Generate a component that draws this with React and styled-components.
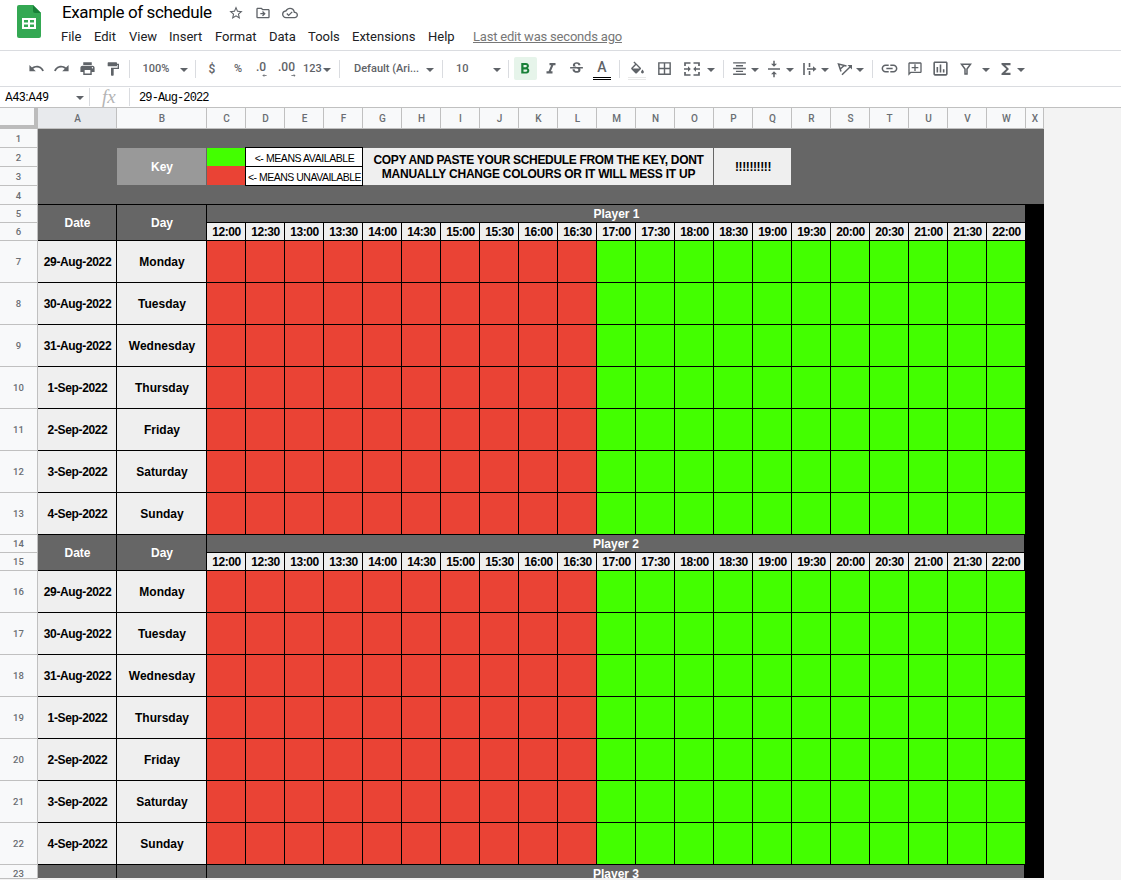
import { Fragment } from "react";
import styled, { createGlobalStyle } from "styled-components";
import {
  MdStarBorder,
  MdOutlineDriveFileMove,
  MdOutlineCloudDone,
  MdUndo,
  MdRedo,
  MdPrint,
  MdFormatPaint,
  MdFormatBold,
  MdFormatItalic,
  MdStrikethroughS,
  MdBorderAll,
  MdFormatAlignCenter,
  MdVerticalAlignCenter,
  MdLink,
  MdOutlineAddComment,
  MdOutlineInsertChart,
  MdFunctions,
} from "react-icons/md";

const GlobalStyle = createGlobalStyle`
  * {
    box-sizing: border-box;
  }
  body {
    margin: 0;
    overflow: hidden;
    background: #ffffff;
    font-family: Roboto, "Liberation Sans", sans-serif;
  }
`;

const Page = styled.div`
  display: flex;
  flex-direction: column;
  width: 1121px;
  height: 880px;
  overflow: hidden;
`;

//title and menus

const Header = styled.header`
  display: flex;
  height: 51px;
  padding-left: 17px;
  border-bottom: 1px solid #dadce0;
`;

const Logo = styled.svg`
  width: 24px;
  height: 33px;
  margin-top: 5px;
  margin-right: 20px;
`;

const HeaderCont = styled.div`
  display: flex;
  flex-direction: column;
`;

const TitleRow = styled.div`
  display: flex;
  align-items: center;
  height: 25px;
  color: #5f6368;
  svg {
    width: 16px;
    height: 16px;
    margin-right: 11px;
  }
`;

const Title = styled.h1`
  width: 167px;
  margin: 0;
  padding: 0 0 1px 1px;
  font-size: 17px;
  font-weight: 400;
  letter-spacing: -0.4px;
  white-space: nowrap;
  color: #000000;
`;

const MenuRow = styled.nav`
  display: flex;
  height: 23px;
  align-items: center;
`;

const MenuItem = styled.span`
  width: ${(props) => props.$width}px;
  font-size: 13px;
  white-space: nowrap;
  color: #202124;
`;

const LastEdit = styled.span`
  font-size: 13px;
  letter-spacing: -0.2px;
  text-decoration: underline;
  white-space: nowrap;
  color: #777777;
`;

//toolbar

const Toolbar = styled.div`
  display: flex;
  align-items: center;
  height: 36px;
  padding-left: 23px;
  border-bottom: 1px solid #dadce0;
  color: #5f6368;
`;

const Slot = styled.div`
  display: flex;
  flex: none;
  flex-direction: column;
  justify-content: center;
  align-items: ${(props) => props.$align || "center"};
  width: ${(props) => props.$width}px;
  height: 23px;
  margin-left: ${(props) => props.$left || 0}px;
  font-size: ${(props) => props.$size || 12}px;
  font-weight: 500;
  white-space: nowrap;
`;

const BoldSlot = styled(Slot)`
  border-radius: 2px;
  padding-right: 1px;
  background: #e6f4ea;
  color: #188038;
`;

const Divider = styled.div`
  flex: none;
  width: 1px;
  height: 18px;
  margin-left: ${(props) => props.$left}px;
  margin-right: ${(props) => props.$right}px;
  background: #dadce0;
`;

const Caret = styled.div`
  flex: none;
  width: 0;
  height: 0;
  margin: 2px 0 0 ${(props) => props.$left || 0}px;
  border: 4px solid transparent;
  border-top-color: #5f6368;
  border-bottom: 0;
`;

const Decimal = styled.div`
  display: flex;
  flex-direction: column;
  align-items: flex-end;
  height: 16px;
  line-height: 13px;
  svg {
    width: 7px;
    height: 5px;
    margin-right: -2px;
  }
`;

const ColorBar = styled.div`
  width: 18px;
  height: 20px;
  margin-top: 2px;
  border-bottom: 3px double ${(props) => props.$color};
  font-size: 14px;
  line-height: 15px;
  text-align: center;
`;

const Flip = styled.div`
  line-height: 0;
  transform: scaleX(-1);
`;

//formula bar

const FormulaBar = styled.div`
  display: flex;
  align-items: center;
  height: 21px;
  border-bottom: 1px solid #c0c0c0;
  color: #000000;
`;

const NameBox = styled.div`
  width: 71px;
  margin-left: 5px;
  font-size: 12px;
  letter-spacing: -0.25px;
`;

const Fx = styled.div`
  width: 27px;
  font-family: "Liberation Serif", serif;
  font-size: 19px;
  font-style: italic;
  line-height: 18px;
  color: #b4b4b4;
`;

const Formula = styled.div`
  padding-top: 2px;
  font-family: "Liberation Mono", monospace;
  font-size: 12px;
  letter-spacing: -0.87px;
`;

//sheet

const SheetArea = styled.main`
  display: flex;
  flex-direction: column;
  height: 772px;
  background: #f3f3f3;
`;

const ColumnRow = styled.div`
  display: grid;
  grid-template-columns: 38px 79px 90px repeat(21, 39px) 18px;
  width: 1044px;
  height: 21px;
`;

const Corner = styled.div`
  border-right: 4px solid #bcbcbc;
  border-bottom: 4px solid #bcbcbc;
  background: #f8f9fa;
`;

const ColumnHead = styled.div`
  display: flex;
  justify-content: center;
  align-items: center;
  padding-left: 1px;
  border-right: 1px solid #c0c0c0;
  border-bottom: 1px solid #c0c0c0;
  background: ${(props) => (props.$active ? "#e8eaed" : "#f8f9fa")};
  font-size: 10px;
  font-weight: 500;
  color: #6a6e73;
`;

const Clip = styled.div`
  display: flex;
  height: 749px;
  overflow: hidden;
`;

const rowHeights =
  "repeat(4, 19px) repeat(2, 18px) repeat(7, 42px) repeat(2, 18px) repeat(7, 42px) 18px 18px";

const RowHeads = styled.div`
  display: grid;
  flex: none;
  grid-template-rows: ${rowHeights};
  width: 38px;
`;

const RowHead = styled(ColumnHead)`
  padding-left: 0;
  font-size: 9.5px;
`;

const Grid = styled.div`
  display: grid;
  flex: none;
  grid-template-columns: 79px 90px repeat(21, 39px) 18px;
  grid-template-rows: ${rowHeights};
  width: 1006px;
  font-family: "Liberation Sans", Arial, sans-serif;
  font-size: 12px;
  font-weight: 700;
`;

const Cell = styled.div`
  display: flex;
  flex-direction: column;
  justify-content: center;
  align-items: center;
  grid-area: ${(props) => props.$area};
  padding-top: 1px;
  padding-left: 1px;
  border-right: ${(props) => (props.$edge ? 2 : 1)}px solid
    ${(props) => props.$line || "#000000"};
  border-bottom: 1px solid ${(props) => props.$line || "#000000"};
  background: ${(props) => props.$bg};
  color: ${(props) => props.$color || "#000000"};
  letter-spacing: ${(props) => props.$spacing || 0}px;
  line-height: 14px;
  text-align: center;
  white-space: nowrap;
`;

const Line = styled.span`
  letter-spacing: ${(props) => props.$spacing}px;
`;

const Backdrop = styled.div`
  grid-area: 1 / 1 / 5 / 25;
  border-bottom: 1px solid #000000;
  background: #666666;
`;

const AvailableCell = styled(Cell)`
  border-right-color: #666666;
  border-bottom-color: #ea4335;
`;

const Legend = styled(Cell)`
  margin: -1px 0 0 -1px;
  padding-top: 2px;
  border: 1px solid #000000;
  font-size: 10.5px;
  font-weight: 400;
`;

const SideBar = styled.div`
  grid-area: 5 / 24 / 25 / 25;
  background: #000000;
`;

const BottomEdge = styled.div`
  height: 2px;
  width: 38px;
  border-top: 1px solid #c0c0c0;
`;

const columns = "ABCDEFGHIJKLMNOPQRSTUVWX".split("");
const menus = [
  ["File", 33],
  ["Edit", 35],
  ["View", 40],
  ["Insert", 46],
  ["Format", 54],
  ["Data", 39],
  ["Tools", 44],
  ["Extensions", 76],
  ["Help", 45],
];
const days = [
  ["29-Aug-2022", "Monday"],
  ["30-Aug-2022", "Tuesday"],
  ["31-Aug-2022", "Wednesday"],
  ["1-Sep-2022", "Thursday"],
  ["2-Sep-2022", "Friday"],
  ["3-Sep-2022", "Saturday"],
  ["4-Sep-2022", "Sunday"],
];
const times = Array.from(
  { length: 21 },
  (_, i) => `${12 + Math.floor(i / 2)}:${i % 2 ? "30" : "00"}`
);

const GREEN = "#43ff00";
const RED = "#ea4335";
const GREY = "#666666";
const LIGHT = "#efefef";

const SheetsLogo = () => (
  <Logo viewBox="0 0 24 33">
    <path d="M2 0h14l8 8v23a2 2 0 0 1-2 2H2a2 2 0 0 1-2-2V2a2 2 0 0 1 2-2z" fill="#34a853" />
    <path d="M16 0l8 8h-6a2 2 0 0 1-2-2z" fill="#188038" />
    <path
      d="M5 13h14v11H5zM7 15v2.500h4V15zm6 0v2.500h4V15zm-6 4.500V22h4v-2.500zm6 0V22h4v-2.500z"
      fill="#ffffff"
      fillRule="evenodd"
    />
  </Logo>
);

const FillIcon = () => (
  <svg width="17" height="17" viewBox="0 -2 24 24" fill="currentColor">
    <path d="M16.560 8.940L7.620 0 6.210 1.410l2.380 2.380-5.150 5.150c-.59.59-.59 1.540 0 2.120l5.500 5.500c.29.29.68.44 1.060.44s.77-.15 1.060-.44l5.500-5.500c.59-.58.59-1.530 0-2.120zM5.210 10L10 5.210 14.790 10H5.210zM19 11.500s-2 2.170-2 3.500c0 1.100.9 2 2 2s2-.9 2-2c0-1.330-2-3.500-2-3.500z" />
  </svg>
);

const MergeIcon = () => (
  <svg width="16" height="14" viewBox="0 0 16 14" fill="none" stroke="currentColor" strokeWidth="1.7">
    <path d="M1 4V1h5.500M9.500 1H15v3M1 10v3h5.500M9.500 13H15v-3" />
    <path d="M0 7h5M16 7h-5" />
    <path d="M4 4.300L6.800 7 4 9.700zM12 4.300L9.200 7 12 9.700z" fill="currentColor" stroke="none" />
  </svg>
);

const WrapIcon = () => (
  <svg width="14" height="14" viewBox="0 0 14 14" fill="none" stroke="currentColor" strokeWidth="1.600">
    <path d="M1 1v12M6.500 1v4M6.500 9v4M4 7h8" />
    <path d="M10 4.200L13.500 7 10 9.800z" fill="currentColor" stroke="none" />
  </svg>
);

const RotateIcon = () => (
  <svg width="16" height="14" viewBox="0 0 16 14" fill="none" stroke="currentColor" strokeWidth="1.500">
    <path d="M4 9.500L1.500 2l8 2M3 7.200L7.200 3.500M5 12.800L13.500 4.500" />
    <path d="M10.500 3H15v4.500z" fill="currentColor" stroke="none" />
  </svg>
);

const FilterIcon = () => (
  <svg width="12" height="12" viewBox="0 0 12 12" fill="none" stroke="currentColor" strokeWidth="1.500">
    <path d="M1.500 1.200h9L7 6v5H5V6z" />
  </svg>
);

const ArrowIcon = ({ right }) => (
  <svg viewBox="0 0 7 5" fill="none" stroke="currentColor" strokeWidth="1.300">
    <path d={right ? "M0 2.500h6M4 .5l2 2-2 2" : "M7 2.500H1M3 .5l-2 2 2 2"} />
  </svg>
);

const PlayerHead = ({ row, name, edge }) => (
  <>
    <Cell $area={`${row} / 1 / ${row + 2} / 2`} $bg={GREY} $color="#fff">
      {row < 23 && "Date"}
    </Cell>
    <Cell $area={`${row} / 2 / ${row + 2} / 3`} $bg={GREY} $color="#fff">
      {row < 23 && "Day"}
    </Cell>
    <Cell $area={`${row} / 3 / ${row + 1} / 24`} $bg={GREY} $color="#fff" $edge={edge}>
      {name}
    </Cell>
  </>
);

const PlayerBlock = ({ row, name, edge }) => (
  <>
    <PlayerHead row={row} name={name} edge={edge} />
    {times.map((time, i) => (
      <Cell
        key={time}
        $area={`${row + 1} / ${i + 3}`}
        $bg={LIGHT}
        $spacing={-0.4}
        $edge={edge && i === 20}
      >
        {time}
      </Cell>
    ))}
    {days.map(([date, day], d) => (
      <Fragment key={date}>
        <Cell $area={`${row + 2 + d} / 1`} $bg={LIGHT} $spacing={-0.35}>
          {date}
        </Cell>
        <Cell $area={`${row + 2 + d} / 2`} $bg={LIGHT}>
          {day}
        </Cell>
        {times.map((time, i) => (
          <Cell
            key={time}
            $area={`${row + 2 + d} / ${i + 3}`}
            $bg={i < 10 ? RED : GREEN}
          />
        ))}
      </Fragment>
    ))}
  </>
);

const App = () => {
  return (
    <Page>
      <GlobalStyle />
      <Header>
        <SheetsLogo />
        <HeaderCont>
          <TitleRow>
            <Title>Example of schedule</Title>
            <MdStarBorder />
            <MdOutlineDriveFileMove />
            <MdOutlineCloudDone />
          </TitleRow>
          <MenuRow>
            {menus.map(([label, width]) => (
              <MenuItem key={label} $width={width}>
                {label}
              </MenuItem>
            ))}
            <LastEdit>Last edit was seconds ago</LastEdit>
          </MenuRow>
        </HeaderCont>
      </Header>

      <Toolbar>
        <Slot $width={26}><MdUndo size={17} /></Slot>
        <Slot $width={25}><MdRedo size={17} /></Slot>
        <Slot $width={26}><MdPrint size={17} /></Slot>
        <Slot $width={26}><MdFormatPaint size={16} /></Slot>
        <Divider $left={3} $right={2} />
        <Slot $width={48} $size={11}>100%</Slot>
        <Caret />
        <Divider $left={7} $right={3} />
        <Slot $width={26}>$</Slot>
        <Slot $width={26} $size={11}>%</Slot>
        <Slot $width={20}>
          <Decimal>.0<ArrowIcon /></Decimal>
        </Slot>
        <Slot $width={31}>
          <Decimal>.00<ArrowIcon right /></Decimal>
        </Slot>
        <Slot $width={21} $size={11}>123</Slot>
        <Caret />
        <Divider $left={8} $right={14} />
        <Slot $width={72} $size={11} $align="flex-start">Default (Ari...</Slot>
        <Caret />
        <Divider $left={8} $right={13} />
        <Slot $width={37} $size={11} $align="flex-start">10</Slot>
        <Caret />
        <Divider $left={7} $right={5} />
        <BoldSlot $width={23}><MdFormatBold size={18} /></BoldSlot>
        <Slot $width={27}><MdFormatItalic size={18} /></Slot>
        <Slot $width={25}><MdStrikethroughS size={17} /></Slot>
        <Slot $width={26}><ColorBar $color="#000000">A</ColorBar></Slot>
        <Divider $left={4} $right={4} />
        <Slot $width={26}>
          <ColorBar $color="#e8e8e8"><FillIcon /></ColorBar>
        </Slot>
        <Slot $width={28}><MdBorderAll size={17} /></Slot>
        <Slot $width={28}><MergeIcon /></Slot>
        <Caret $left={1} />
        <Divider $left={8} $right={3} />
        <Slot $width={24}><MdFormatAlignCenter size={17} /></Slot>
        <Caret />
        <Slot $width={24} $left={3}><MdVerticalAlignCenter size={18} /></Slot>
        <Caret />
        <Slot $width={23} $left={4}><WrapIcon /></Slot>
        <Caret />
        <Slot $width={22} $left={5}><RotateIcon /></Slot>
        <Caret />
        <Divider $left={8} $right={3} />
        <Slot $width={26}><MdLink size={19} /></Slot>
        <Slot $width={26}>
          <Flip><MdOutlineAddComment size={16} /></Flip>
        </Slot>
        <Slot $width={24}><MdOutlineInsertChart size={19} /></Slot>
        <Slot $width={28}><FilterIcon /></Slot>
        <Caret $left={2} />
        <Slot $width={22} $left={5}><MdFunctions size={18} /></Slot>
        <Caret />
      </Toolbar>

      <FormulaBar>
        <NameBox>A43:A49</NameBox>
        <Caret />
        <Divider $left={5} $right={12} />
        <Fx>fx</Fx>
        <Divider $left={0} $right={9} />
        <Formula>29-Aug-2022</Formula>
      </FormulaBar>

      <SheetArea>
        <ColumnRow>
          <Corner />
          {columns.map((letter) => (
            <ColumnHead key={letter} $active={letter === "A"}>
              {letter}
            </ColumnHead>
          ))}
        </ColumnRow>
        <Clip>
          <RowHeads>
            {Array.from({ length: 23 }, (_, i) => (
              <RowHead key={i}>{i + 1}</RowHead>
            ))}
          </RowHeads>
          <Grid>
            <Backdrop />
            <Cell $area="2 / 2 / 4 / 3" $bg="#999999" $line={GREY} $color="#fff">
              Key
            </Cell>
            <AvailableCell $area="2 / 3" $bg={GREEN} />
            <Cell $area="3 / 3" $bg={RED} $line={GREY} />
            <Cell $area="2 / 7 / 4 / 16" $bg={LIGHT} $line={GREY}>
              <Line $spacing={-0.33}>COPY AND PASTE YOUR SCHEDULE FROM THE KEY, DONT</Line>
              <Line $spacing={-0.23}>MANUALLY CHANGE COLOURS OR IT WILL MESS IT UP</Line>
            </Cell>
            <Cell $area="2 / 16 / 4 / 18" $bg={LIGHT} $line={GREY} $spacing={-0.4}>
              !!!!!!!!!!
            </Cell>
            <Legend $area="2 / 4 / 3 / 7" $bg="#fff" $spacing={-0.42}>
              &lt;- MEANS AVAILABLE
            </Legend>
            <Legend $area="3 / 4 / 4 / 7" $bg="#fff" $spacing={-0.5}>
              &lt;- MEANS UNAVAILABLE
            </Legend>
            <PlayerBlock row={5} name="Player 1" />
            <PlayerBlock row={14} name="Player 2" edge />
            <PlayerHead row={23} name="Player 3" edge />
            <SideBar />
          </Grid>
        </Clip>
        <BottomEdge />
      </SheetArea>
    </Page>
  );
};

export default App;
